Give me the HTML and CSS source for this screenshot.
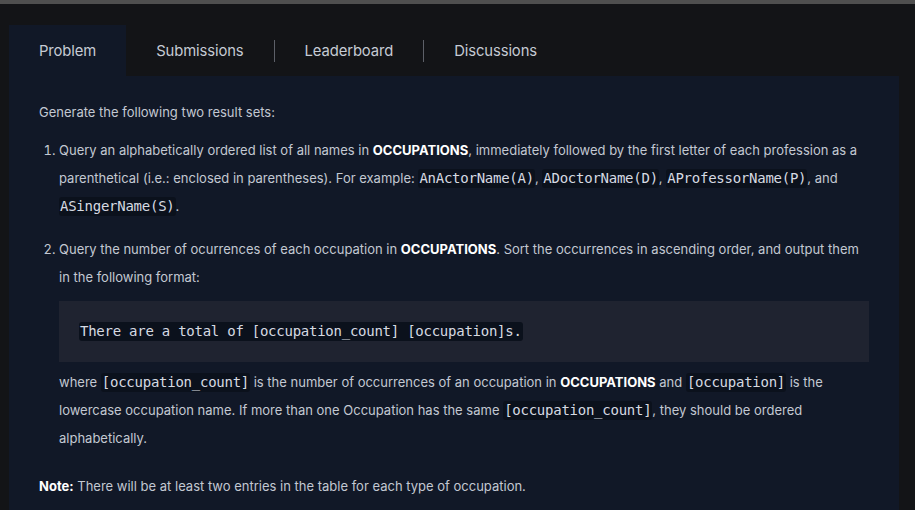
FILE: index.html
```html
<!DOCTYPE html>
<html lang="en">
<head>
<meta charset="utf-8">
<title>Problem</title>
<link rel="stylesheet" href="styles.css">
</head>
<body>
<div class="topbar"></div>
<div class="page">
  <nav class="tabs">
    <div class="tab active">Problem</div>
    <div class="tab">Submissions</div>
    <div class="sep"></div>
    <div class="tab">Leaderboard</div>
    <div class="sep"></div>
    <div class="tab">Discussions</div>
  </nav>
  <section class="panel">
    <p class="intro">Generate the following two result sets:</p>
    <ol class="list">
      <li>Query an alphabetically ordered list of all names in <strong>OCCUPATIONS</strong>, immediately followed by the first letter of each profession as a parenthetical (i.e.: enclosed in parentheses). For example: <code>AnActorName(A)</code>, <code>ADoctorName(D)</code>, <code>AProfessorName(P)</code>, and <code>ASingerName(S)</code>.</li>
      <li>Query the number of ocurrences of each occupation in <strong>OCCUPATIONS</strong>. Sort the occurrences in ascending order, and output them in the following format:
        <pre class="block"><code>There are a total of [occupation_count] [occupation]s.</code></pre>
        <p class="after">where <code>[occupation_count]</code> is the number of occurrences of an occupation in <strong>OCCUPATIONS</strong> and <code>[occupation]</code> is the lowercase occupation name. If more than one Occupation has the same <code>[occupation_count]</code>, they should be ordered alphabetically.</p>
      </li>
    </ol>
    <p class="note"><strong>Note:</strong> There will be at least two entries in the table for each type of occupation.</p>
  </section>
</div>
</body>
</html>
```
FILE: styles.css
```css
html, body {
  margin: 0;
  background: #131417;
  height: 100%;
  overflow: hidden;
}
body {
  font-family: Inter, "Noto Sans", sans-serif;
  color: #c3c8d2;
}
.topbar {
  height: 4px;
  background: #4f4f4f;
}
.page {
  padding: 21px 16px 0 9px;
}
.tabs {
  display: flex;
  align-items: center;
  height: 51px;
}
.tab {
  padding: 1px 30px 0 30px;
  height: 50px;
  display: flex;
  align-items: center;
  font-size: 14.8px;
  letter-spacing: -0.1px;
  color: #c6cbd4;
}
.tab.active {
  background: #111827;
}
.sep {
  width: 1px;
  height: 22px;
  background: #5d6068;
}
.panel {
  background: #111827;
  padding: 22px 30px 20px 30px;
  font-size: 13px;
  line-height: 28px;
  height: 500px;
}
.panel p {
  margin: 0;
}
.intro {
  margin-bottom: 10px !important;
}
.list {
  margin: 0;
  padding-left: 20px;
}
.list li {
  margin-bottom: 15px;
}
.list li:last-child {
  margin-bottom: 20px;
}
strong {
  color: #ffffff;
  font-weight: 700;
}
code {
  font-family: "DejaVu Sans Mono", "Liberation Mono", monospace;
  font-size: 14px;
  letter-spacing: -0.25px;
  background: #0b111c;
  color: #d6dae2;
  border-radius: 3px;
  padding: 1px 1px 2px 1px;
}
.block {
  margin: 10px 0 6px 0;
  background: #1f2330;
  padding: 16px 20px;
  line-height: 28px;
}
.block code {
  background: #0b111c;
}
```
